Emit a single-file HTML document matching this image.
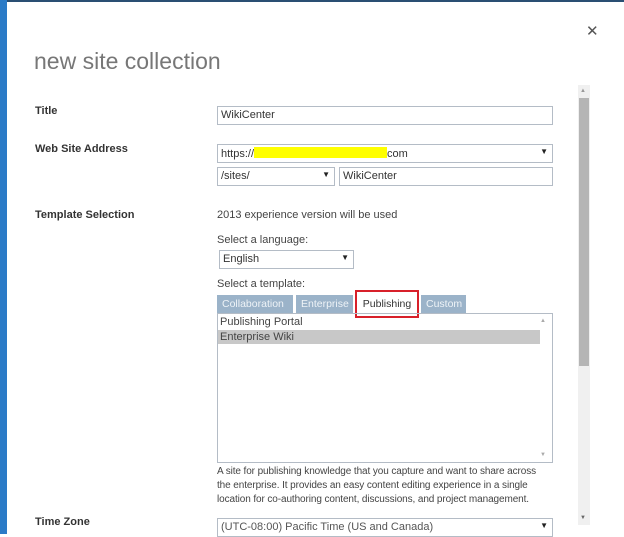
<!DOCTYPE html>
<html><head><style>
body{margin:0;width:624px;height:534px;overflow:hidden;background:#fff;font-family:"Liberation Sans",sans-serif;position:relative;font-size:11px;color:#444}
.a{position:absolute}
.lbl{font-weight:bold;color:#333;font-size:11px}
.in{position:absolute;border:1px solid #b4bcc6;background:#fff;box-sizing:border-box;height:19px;padding:2px 3px;font-size:11px;color:#333}
.arr{position:absolute;right:4px;top:2px;font-size:8px;color:#222}
.tab{position:absolute;top:295px;height:18px;background:#9bb3c9;color:#eef3f7;font-size:11px;line-height:18px;padding:0 5px;box-sizing:border-box;white-space:nowrap;overflow:hidden}
</style></head><body>
<div class="a" style="left:0;top:0;width:624px;height:2px;background:#2a4f73"></div>
<div class="a" style="left:0;top:0;width:7px;height:534px;background:#2b7bc7"></div>
<div class="a" style="left:586px;top:22px;font-size:15px;color:#555">✕</div>
<div class="a" style="left:34px;top:48px;font-size:23px;color:#777">new site collection</div>
<div class="a lbl" style="left:35px;top:105px">Title</div>
<div class="in" style="left:217px;top:106px;width:336px">WikiCenter</div>
<div class="a lbl" style="left:35px;top:143px">Web Site Address</div>
<div class="in" style="left:217px;top:144px;width:336px">https://<span style="background:#ffff00;display:inline-block;width:133px;height:11px;vertical-align:-1px"></span>com<span class="arr">▼</span></div>
<div class="in" style="left:217px;top:167px;width:118px">/sites/<span class="arr">▼</span></div>
<div class="in" style="left:339px;top:167px;width:214px">WikiCenter</div>
<div class="a lbl" style="left:35px;top:209px">Template Selection</div>
<div class="a" style="left:217px;top:209px">2013 experience version will be used</div>
<div class="a" style="left:217px;top:234px">Select a language:</div>
<div class="in" style="left:219px;top:250px;width:135px">English<span class="arr">▼</span></div>
<div class="a" style="left:217px;top:278px">Select a template:</div>
<div class="tab" style="left:217px;width:76px;font-size:10.5px">Collaboration</div>
<div class="tab" style="left:296px;width:57px;font-size:10.5px">Enterprise</div>
<div class="a" style="left:355px;top:290px;width:64px;height:28px;border:2px solid #d8202a;box-sizing:border-box;background:#fff;font-size:10.5px;color:#333;text-align:center;line-height:24px">Publishing</div>
<div class="tab" style="left:421px;width:45px;font-size:10.5px">Custom</div>
<div class="a" style="left:217px;top:313px;width:336px;height:150px;border:1px solid #b4bcc6;box-sizing:border-box">
<div style="padding:2px 2px;color:#444">Publishing Portal</div>
<div style="background:#c8c8c8;width:318px;padding:1px 2px;color:#444">Enterprise Wiki</div>
<div class="a" style="right:6px;top:4px;font-size:6px;color:#aaa">▲</div>
<div class="a" style="right:6px;bottom:4px;font-size:6px;color:#aaa">▼</div>
</div>
<div class="a" style="left:217px;top:465px;width:350px;line-height:14px;color:#444;font-size:10px;letter-spacing:-0.1px">A site for publishing knowledge that you capture and want to share across<br>the enterprise. It provides an easy content editing experience in a single<br>location for co-authoring content, discussions, and project management.</div>
<div class="a lbl" style="left:35px;top:516px">Time Zone</div>
<div class="in" style="left:217px;top:518px;width:336px;height:19px;color:#555">(UTC-08:00) Pacific Time (US and Canada)<span class="arr">▼</span></div>
<div class="a" style="left:578px;top:85px;width:12px;height:440px;background:#f0f0f0"></div>
<div class="a" style="left:579px;top:98px;width:10px;height:268px;background:#b5b5b5"></div>
<div class="a" style="left:580px;top:88px;font-size:6px;color:#999">▲</div>
<div class="a" style="left:580px;top:515px;font-size:6px;color:#666">▼</div>
</body></html>
